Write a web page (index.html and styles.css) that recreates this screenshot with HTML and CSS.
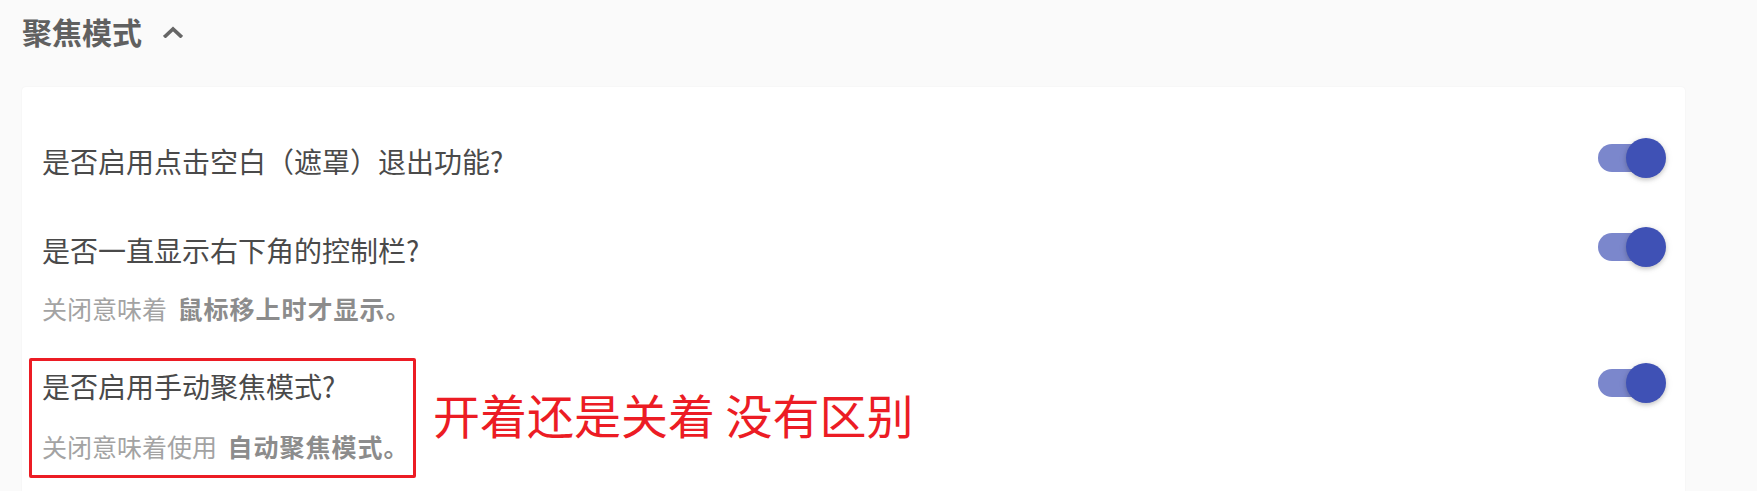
FILE: index.html
```html
<!DOCTYPE html>
<html lang="zh-CN">
<head>
<meta charset="utf-8">
<title>聚焦模式</title>
<link rel="stylesheet" href="styles.css">
</head>
<body>
<div class="page">
  <div class="section-head">
    <h2 class="section-title">聚焦模式</h2>
    <svg class="chevron" width="20" height="12" viewBox="0 0 20 12"><path d="M2.5 10 L10 3 L17.5 10" fill="none" stroke="#666" stroke-width="3.6" stroke-linecap="square" stroke-linejoin="miter"/></svg>
  </div>
  <div class="card">
    <div class="row">
      <div class="row-text">
        <div class="row-title">是否启用点击空白（遮罩）退出功能?</div>
      </div>
      <div class="switch"><span class="track"></span><span class="thumb"></span></div>
    </div>
    <div class="row row-has-sub">
      <div class="row-text">
        <div class="row-title">是否一直显示右下角的控制栏?</div>
        <div class="row-sub">关闭意味着 <b>鼠标移上时才显示。</b></div>
      </div>
      <div class="switch"><span class="track"></span><span class="thumb"></span></div>
    </div>
    <div class="row row-has-sub">
      <div class="row-text">
        <div class="row-title">是否启用手动聚焦模式?</div>
        <div class="row-sub row-sub-last">关闭意味着使用 <b>自动聚焦模式。</b></div>
      </div>
      <div class="switch"><span class="track"></span><span class="thumb"></span></div>
      <div class="mark-box"></div>
      <div class="mark-note">开着还是关着 没有区别</div>
    </div>
  </div>
</div>
</body>
</html>
```
FILE: styles.css
```css
html, body {
  margin: 0;
  padding: 0;
  background: #fafafa;
  font-family: "Noto Sans CJK SC", "Noto Sans", sans-serif;
  overflow: hidden;
}

.page {
  padding: 11px 0 0 22px;
  width: 1663px;
}

.section-head {
  display: flex;
  align-items: center;
  height: 40px;
}

.section-title {
  margin: 0;
  font-size: 30px;
  line-height: 40px;
  font-weight: 700;
  color: #606060;
}

.chevron {
  margin-left: 21px;
  margin-top: 2px;
}

.card {
  margin-top: 36px;
  background: #ffffff;
  border-radius: 4px;
  box-shadow: 0 0 2px rgba(0, 0, 0, 0.06);
  padding: 28px 19px 40px 20px;
}

.row {
  position: relative;
  display: flex;
  align-items: flex-start;
  justify-content: space-between;
  padding: 23px 0;
}

.row-has-sub {
  padding-bottom: 17px;
}

.row-text {
  display: flex;
  flex-direction: column;
  padding-top: 4px;
}

.row-title {
  font-size: 28px;
  line-height: 40px;
  color: #4a4a4a;
  margin-top: -1px;
}

.row-sub {
  margin-top: 23px;
  font-size: 25px;
  line-height: 30px;
  color: #a3a3a3;
}

.row-sub-last {
  margin-top: 25px;
}

.row-sub b {
  margin-left: 5px;
  color: #8c8c8c;
  font-weight: 700;
  letter-spacing: 1px;
}

.switch {
  position: relative;
  width: 68px;
  height: 40px;
  flex: none;
}

.track {
  position: absolute;
  left: 0;
  top: 6px;
  width: 58px;
  height: 28px;
  border-radius: 14px;
  background: #7b87cc;
}

.thumb {
  position: absolute;
  left: 28px;
  top: 0;
  width: 40px;
  height: 40px;
  border-radius: 50%;
  background: #3f51b5;
  box-shadow: 0 2px 4px rgba(0, 0, 0, 0.18), 0 1px 8px rgba(0, 0, 0, 0.08);
}

.mark-box {
  position: absolute;
  left: -13px;
  top: 18px;
  width: 381px;
  height: 114px;
  border: 3px solid #ec1c24;
  border-radius: 2px;
}

.mark-note {
  position: absolute;
  left: 391px;
  top: 48px;
  font-size: 47px;
  line-height: 52px;
  color: #ec1c24;
  white-space: nowrap;
}
```
